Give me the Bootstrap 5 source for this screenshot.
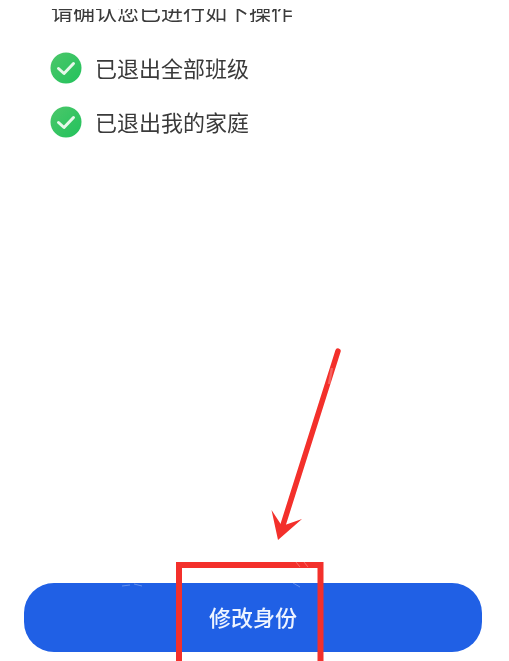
<!DOCTYPE html>
<html lang="zh">
<head>
<meta charset="utf-8">
<link href="https://cdn.jsdelivr.net/npm/bootstrap@5.3.0/dist/css/bootstrap.min.css" rel="stylesheet">
<style>
html,body{margin:0;height:661px;overflow:hidden;background:#fff}
.screen{position:relative;width:509px;height:661px;overflow:hidden;font-family:"Noto Sans CJK SC","Liberation Sans",sans-serif;color:#3a3a3a;filter:blur(.4px)}
.confirm-clip{height:13px;margin:9px 0 0 51px;overflow:hidden;font-size:22px;line-height:22px;flex:none}
.confirm-clip span{display:block;margin-top:-10px}
.done-list{margin:30px 0 0 50px;gap:22px}
.done-item{height:32px;gap:14px;font-size:22px;line-height:32px}
.done-item svg{width:32px;height:32px;flex:none}
.done-item span{margin-left:-1px;padding-bottom:3px}
.bottom-wrap{margin:auto 27px 9px 24px}
.action-btn{height:69px;width:100%;border-radius:30px;background:#2060e5;color:#eef4ff;border:0;padding:0 0 3px;font-size:22px;font-weight:500;line-height:1}
.annot{position:absolute;left:0;top:0;width:509px;height:661px;pointer-events:none}
</style>
</head>
<body>
<div class="screen d-flex flex-column">
  <div class="confirm-clip"><span>请确认您已进行如下操作</span></div>
  <div class="done-list d-flex flex-column">
    <div class="done-item d-flex align-items-center">
      <svg viewBox="0 0 32 32"><defs><linearGradient id="g1" x1="0" y1="0" x2="1" y2="1"><stop offset="0" stop-color="#4cc76a"/><stop offset="1" stop-color="#22c25c"/></linearGradient></defs><circle cx="16" cy="16" r="15.5" fill="url(#g1)"/><path d="M8.500 16.500l5.500 5 9.500-10" fill="none" stroke="#e6f8ea" stroke-width="3" stroke-linecap="round" stroke-linejoin="round"/></svg>
      <span>已退出全部班级</span>
    </div>
    <div class="done-item d-flex align-items-center">
      <svg viewBox="0 0 32 32"><circle cx="16" cy="16" r="15.5" fill="url(#g1)"/><path d="M8.500 16.500l5.500 5 9.500-10" fill="none" stroke="#e6f8ea" stroke-width="3" stroke-linecap="round" stroke-linejoin="round"/></svg>
      <span>已退出我的家庭</span>
    </div>
  </div>
  <div class="bottom-wrap">
    <button type="button" class="btn action-btn">修改身份</button>
  </div>
  <svg class="annot" viewBox="0 0 509 661">
    <path d="M179 661V565H320.500V661" fill="none" stroke="#f3302b" stroke-width="6"/>
    <path d="M338 351L283 525" fill="none" stroke="#f3302b" stroke-width="5.500" stroke-linecap="round"/>
    <path d="M278 540L271.500 510L282 526L302 519Z" fill="#f3302b"/>
    <path d="M296 562L300 567M304 562L308 567M293 583L300 587M122 586L130 585M134 584L142 586" fill="none" stroke="#fff" stroke-width="1" opacity=".3"/>
    <path d="M332 368L329 384" fill="none" stroke="#fff" stroke-width="2.500" opacity=".25"/>
  </svg>
</div>
<script src="https://cdn.jsdelivr.net/npm/bootstrap@5.3.0/dist/js/bootstrap.bundle.min.js"></script>
</body>
</html>
